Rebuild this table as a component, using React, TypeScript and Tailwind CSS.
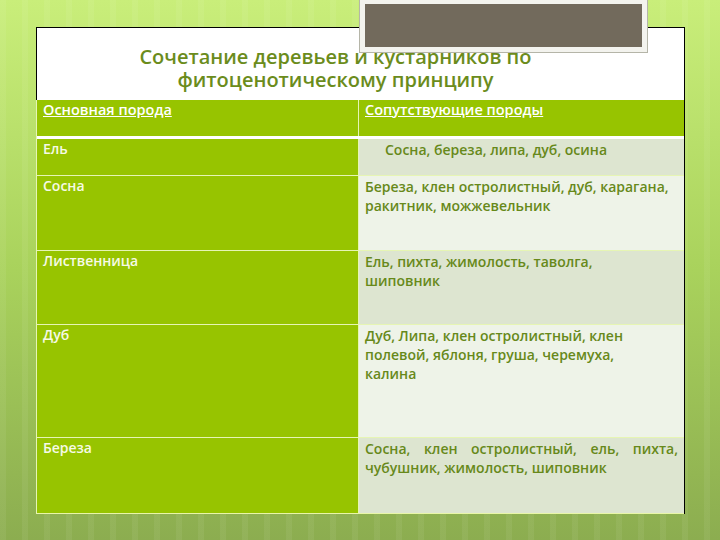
import React from "react";

type Row = { left: string; right: React.ReactNode; h: string; bg: string; cls?: string };

const rows: Row[] = [
  { left: "Ель", right: <span className="pl-[20px]">Сосна, береза, липа, дуб, осина</span>, h: "h-[36px]", bg: "bg-[#dde5d0]" },
  { left: "Сосна", right: <>Береза, клен остролистный, дуб, карагана,<br />ракитник, можжевельник</>, h: "h-[74px]", bg: "bg-[#eef3e8]" },
  { left: "Лиственница", right: <>Ель, пихта, жимолость, таволга,<br />шиповник</>, h: "h-[73px]", bg: "bg-[#dde5d0]" },
  { left: "Дуб", right: <>Дуб, Липа, клен остролистный, клен<br />полевой, яблоня, груша, черемуха,<br />калина</>, h: "h-[112px]", bg: "bg-[#eef3e8]" },
  { left: "Береза", right: <span className="block text-justify [text-align-last:left]">Сосна, клен остролистный, ель, пихта, чубушник, жимолость, шиповник</span>, h: "h-[75px]", bg: "bg-[#dde5d0]" },
];

export default function App() {
  return (
    <div className="relative w-[720px] h-[540px] overflow-hidden bg-gradient-to-b from-[#c9ee7a] via-[#a9d25c] to-[#8cad50] font-['Open_Sans',sans-serif]">
      <div className="absolute inset-0 bg-[repeating-linear-gradient(90deg,rgba(255,255,255,0.06)_0px,rgba(255,255,255,0.06)_6px,rgba(255,255,255,0)_6px,rgba(255,255,255,0)_22px)]" />
      <div className="relative pt-[27px] pl-[36px] w-[685px]">
        <div className="border-t border-l border-r border-black bg-white">
          <div className="h-[72px] pt-[17px] pr-[50px] text-center text-[20px] leading-[23px] font-semibold text-[#6b8c1c]">
            Сочетание деревьев и кустарников по
            <br />
            фитоценотическому принципу
          </div>
        </div>
        <div className="border-r border-black border-l border-l-[#e6f5b4] bg-[#e6f5b4]">
          <div className="grid grid-cols-[321px_1fr] h-[36px] gap-x-px bg-[#e6f5b4]">
            <div className="bg-[#97c400] px-[6px] pt-0 text-[14.5px] leading-[20px] font-semibold text-white underline">Основная порода</div>
            <div className="bg-[#97c400] px-[6px] pt-0 text-[14.5px] leading-[20px] font-semibold text-white underline">Сопутствующие породы</div>
          </div>
          <div className="h-[3px] bg-white" />
          <div className="flex flex-col gap-y-px">
            {rows.map((r) => (
              <div key={r.left} className={`grid grid-cols-[321px_1fr] gap-x-px ${r.h}`}>
                <div className="bg-[#97c400] px-[6px] pt-0 text-[14px] leading-[20px] font-semibold text-[#f6fae6]">{r.left}</div>
                <div className={`${r.bg} px-[6px] pt-[1px] text-[14px] leading-[19px] font-semibold text-[#67891a]`}>{r.right}</div>
              </div>
            ))}
          </div>
          <div className="h-px bg-[#e9f6a8]" />
        </div>
      </div>
      <div className="absolute left-[359px] top-[-2px] w-[289px] h-[55px] border border-[#b5b5a8] bg-[#f3f3ee] p-[5px]">
        <div className="w-full h-full bg-[#726a5c]" />
      </div>
    </div>
  );
}
